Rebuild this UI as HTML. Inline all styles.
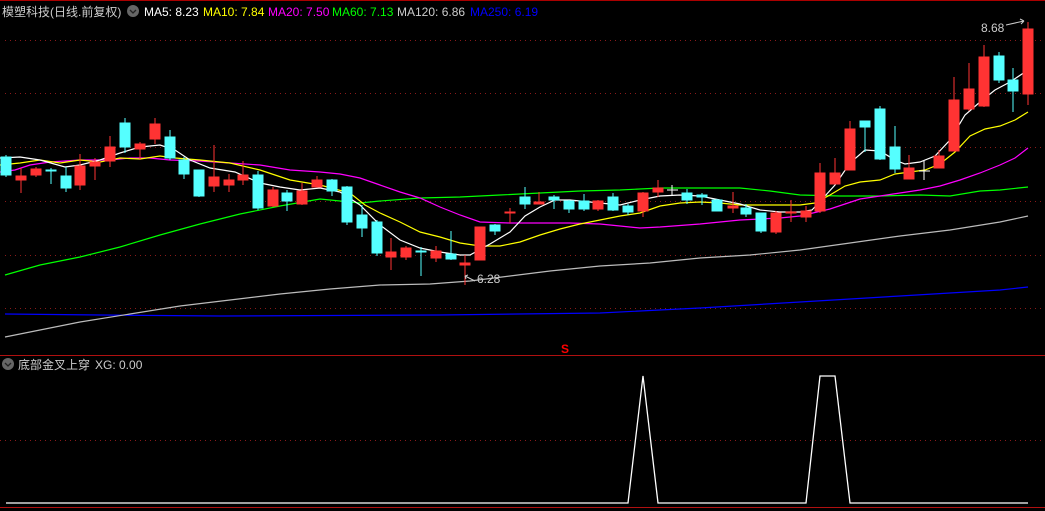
<!DOCTYPE html>
<html><head><meta charset="utf-8"><style>
html,body{margin:0;padding:0;background:#000;width:1045px;height:511px;overflow:hidden}
svg{display:block}
text{font-family:"Liberation Sans","Noto Sans CJK SC",sans-serif;font-size:12px}
</style></head><body>
<svg width="1045" height="511" viewBox="0 0 1045 511" xmlns="http://www.w3.org/2000/svg">
<rect width="1045" height="511" fill="#000"/>
<line x1="0" y1="0.5" x2="1045" y2="0.5" stroke="#a00" />
<g stroke="#8a1a1a" stroke-dasharray="1,4" stroke-width="1">
<line x1="5" y1="40.5" x2="1045" y2="40.5"/><line x1="5" y1="93.5" x2="1045" y2="93.5"/>
<line x1="5" y1="147.5" x2="1045" y2="147.5"/><line x1="5" y1="201.5" x2="1045" y2="201.5"/>
<line x1="5" y1="255.5" x2="1045" y2="255.5"/><line x1="5" y1="308.5" x2="1045" y2="308.5"/>
<line x1="0" y1="440.5" x2="1045" y2="440.5"/>
</g>
<line x1="0" y1="355.5" x2="1045" y2="355.5" stroke="#b01010"/>
<line x1="0" y1="507.5" x2="1045" y2="507.5" stroke="#b01010"/>
<text x="2" y="16" fill="#ccc" font-size="13">模塑科技(日线.前复权)</text>
<circle cx="133" cy="11" r="6" fill="#666"/><path d="M130 10l3 3 3-3" stroke="#222" fill="none" stroke-width="1.3"/>
<text x="144" y="16" fill="#fff">MA5: 8.23</text>
<text x="203" y="16" fill="#ff0">MA10: 7.84</text>
<text x="268" y="16" fill="#f0f">MA20: 7.50</text>
<text x="332" y="16" fill="#0f0">MA60: 7.13</text>
<text x="397" y="16" fill="#ccc">MA120: 6.86</text>
<text x="470" y="16" fill="#00f">MA250: 6.19</text>
<circle cx="8" cy="364" r="6" fill="#666"/><path d="M5 363l3 3 3-3" stroke="#222" fill="none" stroke-width="1.3"/>
<text x="18" y="369" fill="#ccc" font-size="13">底部金叉上穿</text>
<text x="95" y="369" fill="#ccc">XG: 0.00</text>
<text x="561" y="353" fill="#f00" font-size="12" font-weight="bold">S</text>
<g fill="none" stroke-width="1.2">
<polyline stroke="#00f" points="5,314 100,315 220,316 440,315 600,313 700,308 800,302 900,296 1000,290 1028,287"/>
<polyline stroke="#bbb" points="5,337 40,330 80,322 130,314 180,306 230,300 280,294 330,289 380,285 430,284 470,281 510,276 550,271 600,266 650,263 700,258 750,255 800,250 850,243 900,236 950,230 1000,222 1028,216"/>
<polyline stroke="#0f0" points="5,275 40,265 80,257 120,247 160,235 200,224 240,214 280,206 320,199 360,203 380,201 420,198 460,197 500,195 540,193 580,191 620,190 660,188 700,188 740,188 770,191 800,195 840,196 880,196 920,195 950,196 980,191 1000,190 1028,187"/>
<polyline stroke="#f0f" points="0,172 15,170 30,165 50,162 80,160 110,160 130,158 150,158 170,160 200,161 230,163 260,165 290,170 320,172 340,174 360,178 380,185 400,192 420,198 440,207 460,215 480,222 510,223 540,223 570,223 600,224 620,226 640,228 660,227 700,224 740,220 780,218 800,216 830,209 860,199 880,196 900,193 920,190 940,186 960,180 980,173 1000,165 1015,158 1028,148"/>
<polyline stroke="#ff0" points="0,165 20,163 40,160 60,163 80,160 100,162 120,158 140,159 160,156 175,158 200,160 230,163 260,170 290,180 320,185 350,193 365,205 380,213 400,222 420,232 440,237 460,243 480,246 500,246 520,242 540,235 560,229 580,224 600,220 620,216 640,213 660,206 680,203 700,202 720,203 740,205 760,205 780,205 800,205 815,203 830,195 845,186 860,182 880,180 895,174 910,172 925,170 940,164 955,152 970,136 985,129 1000,126 1015,120 1028,112"/>
<polyline stroke="#fff" points="0,158 20,157 40,160 65,167 80,165 100,160 120,153 140,147 160,145 175,150 190,160 210,168 235,172 260,183 280,187 300,190 320,188 340,192 360,205 380,225 400,240 420,248 440,252 460,255 470,255 490,244 510,232 525,216 540,207 555,200 570,200 600,203 620,205 640,200 660,196 680,195 700,196 720,200 740,204 760,210 780,212 800,212 812,210 825,196 835,185 850,163 865,150 880,151 895,160 905,164 920,162 935,156 950,140 965,115 980,102 995,90 1010,82 1028,70"/>
</g>
<g id="c" stroke-width="1">
<!-- cx, body top, body bottom, high, low -->
<g stroke="#5ff" fill="#5ff">
<line x1="6" y1="155" x2="6" y2="177"/><rect x="1" y="157" width="10" height="18"/>
<line x1="51" y1="168" x2="51" y2="184"/><rect x="46" y="170" width="10" height="1"/>
<line x1="66" y1="167" x2="66" y2="192"/><rect x="61" y="176" width="10" height="12"/>
<line x1="125" y1="118" x2="125" y2="153"/><rect x="120" y="123" width="10" height="24"/>
<line x1="170" y1="130" x2="170" y2="160"/><rect x="165" y="137" width="10" height="21"/>
<line x1="184" y1="157" x2="184" y2="179"/><rect x="179" y="160" width="10" height="14"/>
<line x1="199" y1="170" x2="199" y2="197"/><rect x="194" y="170" width="10" height="26"/>
<line x1="258" y1="171" x2="258" y2="210"/><rect x="253" y="175" width="10" height="33"/>
<line x1="287" y1="190" x2="287" y2="211"/><rect x="282" y="193" width="10" height="8"/>
<line x1="332" y1="179" x2="332" y2="196"/><rect x="327" y="180" width="10" height="11"/>
<line x1="347" y1="186" x2="347" y2="225"/><rect x="342" y="187" width="10" height="35"/>
<line x1="362" y1="205" x2="362" y2="237"/><rect x="357" y="215" width="10" height="13"/>
<line x1="377" y1="220" x2="377" y2="256"/><rect x="372" y="222" width="10" height="31"/>
<line x1="421" y1="247" x2="421" y2="276"/><rect x="416" y="251" width="10" height="1"/>
<line x1="451" y1="231" x2="451" y2="260"/><rect x="446" y="254" width="10" height="5"/>
<line x1="495" y1="224" x2="495" y2="235"/><rect x="490" y="225" width="10" height="6"/>
<line x1="525" y1="187" x2="525" y2="209"/><rect x="520" y="197" width="10" height="7"/>
<line x1="554" y1="195" x2="554" y2="209"/><rect x="549" y="197" width="10" height="3"/>
<line x1="569" y1="200" x2="569" y2="213"/><rect x="564" y="201" width="10" height="8"/>
<line x1="584" y1="194" x2="584" y2="211"/><rect x="579" y="201" width="10" height="8"/>
<line x1="613" y1="193" x2="613" y2="211"/><rect x="608" y="197" width="10" height="13"/>
<line x1="628" y1="204" x2="628" y2="215"/><rect x="623" y="206" width="10" height="6"/>
<line x1="687" y1="189" x2="687" y2="204"/><rect x="682" y="193" width="10" height="7"/>
<line x1="702" y1="193" x2="702" y2="205"/><rect x="697" y="195" width="10" height="2"/>
<line x1="717" y1="199" x2="717" y2="211"/><rect x="712" y="200" width="10" height="11"/>
<line x1="746" y1="204" x2="746" y2="217"/><rect x="741" y="208" width="10" height="6"/>
<line x1="761" y1="213" x2="761" y2="233"/><rect x="756" y="213" width="10" height="18"/>
<line x1="865" y1="121" x2="865" y2="152"/><rect x="860" y="121" width="10" height="6"/>
<line x1="880" y1="106" x2="880" y2="160"/><rect x="875" y="109" width="10" height="50"/>
<line x1="895" y1="126" x2="895" y2="173"/><rect x="890" y="147" width="10" height="22"/>
<line x1="999" y1="52" x2="999" y2="83"/><rect x="994" y="56" width="10" height="24"/>
<line x1="1013" y1="68" x2="1013" y2="112"/><rect x="1008" y="80" width="10" height="11"/>
</g>
<g stroke="#f33" fill="#f33">
<line x1="21" y1="168" x2="21" y2="193"/><rect x="16" y="176" width="10" height="4"/>
<line x1="36" y1="167" x2="36" y2="177"/><rect x="31" y="169" width="10" height="6"/>
<line x1="80" y1="154" x2="80" y2="190"/><rect x="75" y="166" width="10" height="19"/>
<line x1="95" y1="158" x2="95" y2="180"/><rect x="90" y="162" width="10" height="4"/>
<line x1="110" y1="136" x2="110" y2="167"/><rect x="105" y="147" width="10" height="14"/>
<line x1="140" y1="142" x2="140" y2="160"/><rect x="135" y="144" width="10" height="5"/>
<line x1="155" y1="118" x2="155" y2="144"/><rect x="150" y="124" width="10" height="15"/>
<line x1="214" y1="145" x2="214" y2="192"/><rect x="209" y="177" width="10" height="9"/>
<line x1="229" y1="174" x2="229" y2="192"/><rect x="224" y="180" width="10" height="5"/>
<line x1="243" y1="161" x2="243" y2="185"/><rect x="238" y="175" width="10" height="5"/>
<line x1="273" y1="187" x2="273" y2="207"/><rect x="268" y="190" width="10" height="16"/>
<line x1="302" y1="183" x2="302" y2="205"/><rect x="297" y="191" width="10" height="13"/>
<line x1="317" y1="176" x2="317" y2="187"/><rect x="312" y="180" width="10" height="7"/>
<line x1="391" y1="238" x2="391" y2="270"/><rect x="386" y="252" width="10" height="5"/>
<line x1="406" y1="246" x2="406" y2="260"/><rect x="401" y="248" width="10" height="9"/>
<line x1="436" y1="246" x2="436" y2="262"/><rect x="431" y="251" width="10" height="7"/>
<line x1="465" y1="255" x2="465" y2="285"/><rect x="460" y="263" width="10" height="2"/>
<line x1="480" y1="227" x2="480" y2="260"/><rect x="475" y="227" width="10" height="33"/>
<line x1="510" y1="208" x2="510" y2="223"/><rect x="505" y="212" width="10" height="1"/>
<line x1="539" y1="192" x2="539" y2="204"/><rect x="534" y="202" width="10" height="2"/>
<line x1="598" y1="200" x2="598" y2="211"/><rect x="593" y="201" width="10" height="8"/>
<line x1="643" y1="192" x2="643" y2="217"/><rect x="638" y="193" width="10" height="18"/>
<line x1="658" y1="180" x2="658" y2="197"/><rect x="653" y="188" width="10" height="4"/>
<line x1="733" y1="192" x2="733" y2="213"/><rect x="728" y="206" width="10" height="2"/>
<line x1="776" y1="211" x2="776" y2="234"/><rect x="771" y="213" width="10" height="19"/>
<line x1="791" y1="200" x2="791" y2="222"/><rect x="786" y="212" width="10" height="1"/>
<line x1="806" y1="206" x2="806" y2="222"/><rect x="801" y="211" width="10" height="6"/>
<line x1="820" y1="163" x2="820" y2="213"/><rect x="815" y="173" width="10" height="38"/>
<line x1="835" y1="158" x2="835" y2="184"/><rect x="830" y="173" width="10" height="11"/>
<line x1="850" y1="121" x2="850" y2="170"/><rect x="845" y="129" width="10" height="41"/>
<line x1="909" y1="155" x2="909" y2="179"/><rect x="904" y="168" width="10" height="11"/>
<line x1="939" y1="150" x2="939" y2="168"/><rect x="934" y="156" width="10" height="12"/>
<line x1="954" y1="77" x2="954" y2="151"/><rect x="949" y="100" width="10" height="51"/>
<line x1="969" y1="63" x2="969" y2="111"/><rect x="964" y="89" width="10" height="20"/>
<line x1="984" y1="45" x2="984" y2="107"/><rect x="979" y="57" width="10" height="49"/>
<line x1="1028" y1="22" x2="1028" y2="105"/><rect x="1023" y="29" width="10" height="65"/>
</g>
<g stroke="#fff">
<line x1="672" y1="185" x2="672" y2="195"/><line x1="667" y1="190" x2="678" y2="190"/>
<line x1="924" y1="160" x2="924" y2="180"/><line x1="919" y1="171" x2="930" y2="171"/>
</g>
</g>
<text x="477" y="283" fill="#ccc" font-size="11">6.28</text>
<path d="M465 276l10 5M465 276l3 -1M465 276l1 3" stroke="#ccc" fill="none"/>
<text x="981" y="32" fill="#ccc" font-size="11">8.68</text>
<path d="M1006 25l18 -4M1024 21l-4 -2M1024 21l-3 3" stroke="#ccc" fill="none"/>
<polyline fill="none" stroke="#fff" stroke-width="1.3" points="6,503 628,503 643,376 658,503 806,503 820,376 835,376 850,503 1028,503"/>
</svg>
</body></html>
